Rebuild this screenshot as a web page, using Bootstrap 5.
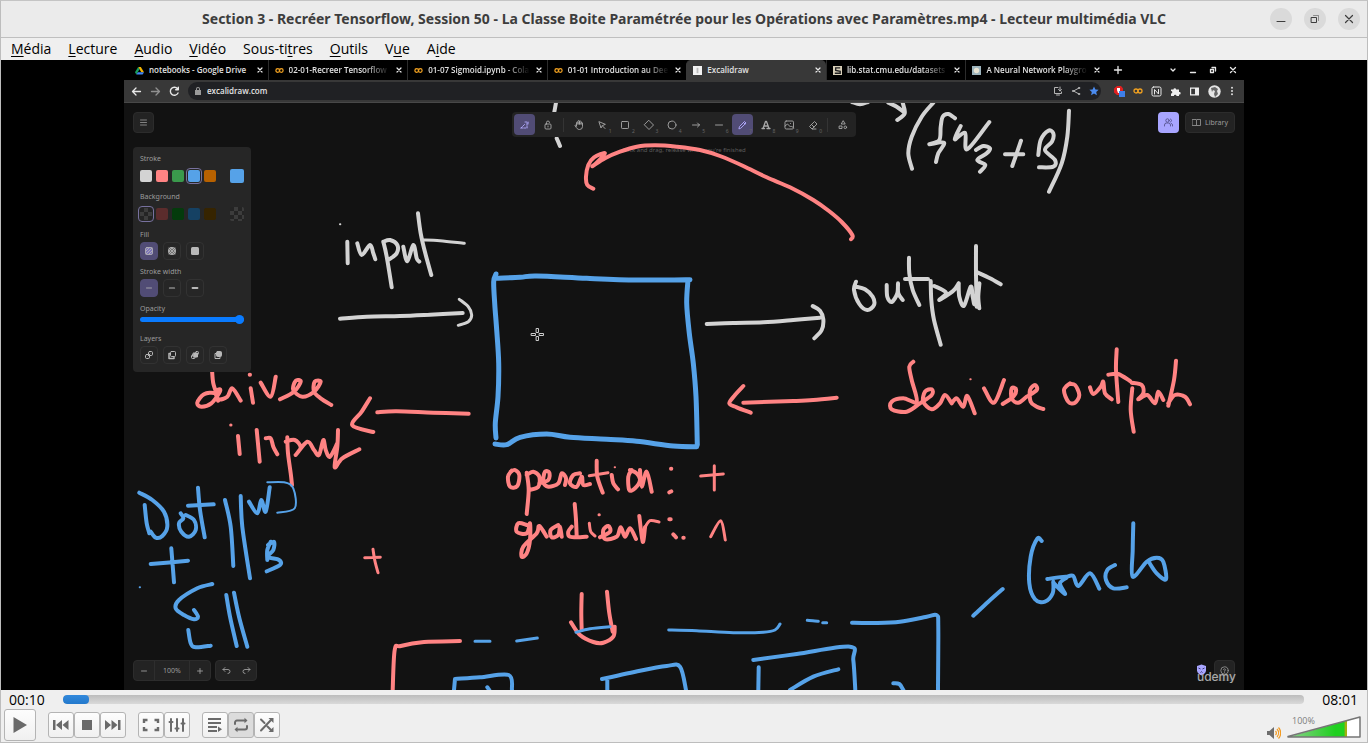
<!DOCTYPE html>
<html lang="fr">
<head>
<meta charset="utf-8">
<meta name="viewport" content="width=device-width, initial-scale=1">
<title>Lecteur multimédia VLC</title>
<link href="https://cdn.jsdelivr.net/npm/bootstrap@5.3.0/dist/css/bootstrap.min.css" rel="stylesheet">
<style>
body{font-family:"Open Sans","Noto Sans",sans-serif;font-size:14px;line-height:20px;background:#efefef;color:#000;height:100vh}
.app{border:1px solid #bdbdbd;border-top-color:#c4c4c4}
button{font:inherit;color:inherit;padding:0;border:0;background:none;display:inline-flex;align-items:center;justify-content:center;flex:none}
svg{display:block;flex:none}
.ic{fill:none;stroke:currentColor;stroke-linecap:round;stroke-linejoin:round}
.titlebar{height:37px;background:#ebebeb;border-bottom:1px solid #bfbfbf}
.titlebar h1{font-family:"Noto Sans",sans-serif;font-size:14px;line-height:20px;font-weight:700;color:#3d3d3d}
.side{width:102px;padding-right:7px}
.winbtn{width:22px;height:22px;border-radius:50%;background:#dadada;color:#3d3d3d}
.menubar{height:22px;padding:0 10px;gap:17px}
.menubar a{color:#000;text-decoration:none}
.menubar u{text-underline-offset:2px}
.stage{background:#000;min-height:0}
.screen{aspect-ratio:16/9;background:#121212;min-height:0;overflow:hidden;color:#e8e8e8;font-size:8px;line-height:12px}
.tabs{height:20px;background:#000;padding-left:5px;padding-right:7px}
.tabset{width:976px}
.btab{flex:1 1 0;min-width:0;padding:0 4px 0 6px;gap:5px;font-weight:600}
.btab+.btab{border-left:1px solid #2c2c2c}
.btab.on{background:#383838;border-radius:5px 5px 0 0;border-color:#383838}
.btab .cap{overflow:hidden;white-space:nowrap;flex:1 1 0;color:#e2e2e2}
.fade-r{-webkit-mask-image:linear-gradient(90deg,#000 75%,transparent)}
.urlbar{height:23px;background:#383838;border-bottom:1px solid #484848;padding:0 5px 0 7px;gap:8px}
.omni{height:18px;border-radius:9px;background:#202124;padding:0 2px 0 5px}
.omni input{background:none;border:0;outline:0;color:#e4e4e4;padding:0;min-width:0;font-weight:600}
.canvas{min-height:0;padding:9px;font-family:"Noto Sans",sans-serif;font-size:7px;line-height:10px;color:#9c9c9c}
.ink{position:absolute;inset:0;width:100%;height:100%;z-index:1;fill:none;stroke-linecap:round;stroke-linejoin:round}
.over{position:relative;z-index:2}
.board{display:grid;grid-template-columns:1fr 344px 1fr;row-gap:10px;align-items:start}
.sq{width:21px;height:21px;border-radius:4px}
.isle{background:#232323;border:1px solid #2c2c2c;border-radius:4px}
.share{gap:6px}
.lib{width:auto;padding:0 6px}
.tools{background:#232323;border-radius:4px;padding:2px;height:25px}
.tools .sep{width:1px;height:14px;margin:0 2px;background:#343434}
.tools button{position:relative;color:#a8a8a8}
.tools small{position:absolute;right:1px;bottom:1px;font-size:5px;line-height:6px;color:#666}
.tools .on,.opt .on{background:#514c75;color:#b2aaff;border-color:#514c75}
.hint{color:#5c5c5c;font-size:6px;line-height:6px}
.opt{width:118px;background:#262626;border-radius:4px;padding:7px 7px 1px}
.opt fieldset{min-width:0}
.opt legend{font-size:7px;line-height:10px;margin:0;float:none}
.opt .sw{height:16px;margin:4px 0 8px;gap:4px}
.opt .sw button{width:12px;height:12px;border-radius:2px}
.opt .sw .vr{width:1px;min-height:0;height:14px;margin:0 3px;opacity:1;background:#3a3a3a}
.opt .sw .big{width:14px;height:14px}
.sel{outline:1px solid #77719e;outline-offset:1px}
.c1{background:#d3d3d3}.c2{background:#ff8383}.c3{background:#3a994c}.c4{background:#56a2e8}.c5{background:#b76100}
.d2{background:#5b2c2c}.d3{background:#043b0c}.d4{background:#154163}.d5{background:#362400}
.chk{background:repeating-conic-gradient(#3c3c3c 0 25%,#242424 0 50%) 0 0/8px 8px}
.opt .row3{gap:5px;margin:2px 0 7px}
.opt .row3 button{width:18px;height:18px;border:1px solid #323232;border-radius:4px;color:#b8b8b8}
.opt .row3 .on{border-color:#514c75}
.opt input{display:block;width:104px;height:10px;margin:0 0 10px;appearance:none;background:none}
.opt input::-webkit-slider-runnable-track{height:5px;border-radius:3px;background:#0a7bff}
.opt input::-webkit-slider-thumb{appearance:none;width:9px;height:9px;margin-top:-2px;border-radius:50%;background:#0a7bff}
.foot .isle button{height:19px;width:20px}
.foot .isle .pct{width:36px;border:solid #2e2e2e;border-width:0 1px}
.collab{background:#a8a5ff;color:#4a4780}
.brand{position:absolute;right:-1px;bottom:-3px;font-family:Inter,sans-serif;font-size:12px;line-height:14px;font-weight:500;color:#a9a9a9}
.shield{position:absolute;right:28px;bottom:5px}
.seek{height:19px;padding:0 9px 0 8px;gap:18px}
.seek input{appearance:none;height:9px;border-radius:4px;background:linear-gradient(#bcbcbc,#d9d9d9);overflow:hidden}
.seek input::-webkit-slider-thumb{appearance:none;width:26px;height:9px;border-radius:4px;background:linear-gradient(#3289dc,#2379cc)}
.ctl{height:33px;padding:0 6px 2px 3px}
.ctl .btn-v{width:26px;height:26px;border:1px solid #b4b4b4;border-radius:3px;background:linear-gradient(#fdfdfd,#f0f0f0);color:#6a6a6a}
.ctl .play{width:32px;height:32px}
.ctl .down{background:#dcdcdc}
.vol{position:relative;width:74px;height:24px;margin-left:6px;margin-top:4px}
.vol span{position:absolute;left:5px;top:1px;font-size:9px;line-height:10px;color:#7d7d7d}
.vol input{position:absolute;inset:0;width:100%;opacity:0}
</style>
</head>
<body>
<div class="app d-flex flex-column h-100">
<header class="titlebar d-flex align-items-center flex-shrink-0">
  <div class="side"></div>
  <h1 class="flex-grow-1 text-center text-nowrap m-0">Section 3 - Recréer Tensorflow, Session 50 - La Classe Boite Paramétrée pour les Opérations avec Paramètres.mp4 - Lecteur multimédia VLC</h1>
  <div class="side d-flex justify-content-end gap-2">
    <button class="winbtn me-1" aria-label="Réduire"><svg class="ic" width="10" height="10" stroke-width="1"><path d="M1 7.500h8"/></svg></button>
    <button class="winbtn me-1" aria-label="Restaurer"><svg class="ic" width="10" height="10"><path d="M1.500 3.500h5v5h-5z"/><path d="M3.500 1.500h5v5" opacity=".5"/></svg></button>
    <button class="winbtn" aria-label="Fermer"><svg class="ic" width="10" height="10" stroke-width="1.200"><path d="M1.500 1.500l7 7M8.500 1.500l-7 7"/></svg></button>
  </div>
</header>
<nav class="menubar d-flex align-items-center flex-shrink-0">
  <a href="#"><u>M</u>édia</a><a href="#"><u>L</u>ecture</a><a href="#"><u>A</u>udio</a><a href="#"><u>V</u>idéo</a><a href="#">Sous-ti<u>t</u>res</a><a href="#"><u>O</u>utils</a><a href="#">V<u>u</u>e</a><a href="#">A<u>i</u>de</a>
</nav>
<main class="stage flex-grow-1 d-flex justify-content-center">
<div class="screen d-flex flex-column">
  <div class="tabs d-flex align-items-center flex-shrink-0">
    <div class="tabset d-flex align-self-stretch" id="tabset"></div>
    <button class="ms-2 me-auto" aria-label="Nouvel onglet"><svg class="ic" width="10" height="10" stroke-width="1.300"><path d="M5 1.500v7M1.500 5h7"/></svg></button>
    <div class="d-flex gap-2 pe-0">
      <button class="me-1" aria-label="Onglets"><svg class="ic" width="8" height="8" stroke-width="1.300"><path d="M2 3l2 2 2-2"/></svg></button>
      <button class="me-1" aria-label="Réduire"><svg class="ic" width="8" height="8" stroke-width="1.300"><path d="M1.500 6.500h5"/></svg></button>
      <button class="me-1" aria-label="Restaurer"><svg class="ic" width="8" height="8" stroke-width="1.300"><path d="M1.500 3.500h3v3h-3zM3 1.500h3.500v3.500"/></svg></button>
      <button aria-label="Fermer"><svg class="ic" width="8" height="8" stroke-width="1.300"><path d="M1.500 1.500l5 5M6.500 1.500l-5 5"/></svg></button>
    </div>
  </div>
  <div class="urlbar d-flex align-items-center flex-shrink-0">
    <button aria-label="Précédent"><svg class="ic" width="11" height="11" stroke-width="1.300"><path d="M9.500 5.500h-8M5 2L1.500 5.500 5 9"/></svg></button>
    <button aria-label="Suivant"><svg class="ic" width="11" height="11" stroke-width="1.300" opacity=".5"><path d="M1.500 5.500h8M6 2l3.500 3.500L6 9"/></svg></button>
    <button aria-label="Actualiser"><svg class="ic" width="11" height="11" stroke-width="1.400"><path d="M9 7a4 4 0 1 1-.5-4.200M9.300 1.200v2.600H6.700"/></svg></button>
    <div class="omni d-flex align-items-center flex-grow-1">
      <svg class="me-1" width="10" height="10" fill="#9a9a9a"><path d="M3 4V3a2 2 0 0 1 4 0v1h1v5H2V4zm1 0h2V3a1 1 0 0 0-2 0z"/></svg>
      <input class="flex-grow-1" aria-label="Adresse" value="excalidraw.com">
      <div class="d-flex gap-2">
        <svg class="ic" width="10" height="10" color="#b5b5b5"><path d="M5 1.500H1.500v6h7V6M3.500 9h3M7 1v4M5.500 3.500L7 5l1.500-1.500"/></svg>
        <svg class="ic" width="10" height="10" color="#b5b5b5"><path d="M8 2L2.500 5 8 8"/><circle cx="8" cy="2" r=".7"/><circle cx="2" cy="5" r=".7"/><circle cx="8" cy="8" r=".7"/></svg>
        <svg width="10" height="10" fill="#4b8cf0"><path d="M5 .5l1.400 3 3.200.3-2.400 2.200.7 3.300L5 7.600 2.100 9.300l.7-3.300L.4 3.800l3.200-.3z"/></svg>
      </div>
    </div>
    <svg class="ms-1" width="12" height="12"><path d="M4 1h4l2 2.500v4L8 10H4L1 7.500v-4z" fill="#e02020"/><path d="M4 5V3h3v5H5z" fill="#fff"/><path d="M6 6h6v6H6z" fill="#3f7fe8"/></svg>
    <svg class="ic" width="10" height="10" color="#f0a020" stroke-width="1.300"><circle cx="3" cy="5" r="2"/><circle cx="7" cy="5" r="2"/></svg>
    <svg class="ic" width="11" height="11"><rect x="1" y="1" width="9" height="9" rx="1.500"/><path d="M3.500 8V3.500L7.500 8V3.500"/></svg>
    <svg width="11" height="11" fill="#eee"><path d="M1 3.500h2.500a1.300 1.300 0 1 1 2.600 0H9V6a1.300 1.300 0 1 1 0 2.500V10H6.500a1.300 1.300 0 0 0-2.600 0H1V7.500a1.300 1.300 0 0 0 0-2.600z"/></svg>
    <svg width="11" height="11" fill="#eee"><path d="M1 1.500h9v8H1zm1.200 1.200v5.600H6V2.700z" fill-rule="evenodd"/></svg>
    <svg width="13" height="13"><circle cx="6.500" cy="6.500" r="6.200" fill="#e4e4e4"/><path d="M3 3l4-1 3 2-1 2 1 3-3 3-1-3 1-3-2-1-1 2z" fill="#666"/></svg>
    <svg class="me-1" width="6" height="10" fill="#ddd"><circle cx="3" cy="1.700" r="1"/><circle cx="3" cy="5" r="1"/><circle cx="3" cy="8.300" r="1"/></svg>
  </div>
  <div class="canvas position-relative flex-grow-1 d-flex flex-column">
    <svg class="ink" viewBox="124 103 1120 587" role="img" aria-label="Schéma manuscrit: input, output, derivee output, derivee input, operation: +, gradient: 1, Dot W + B, Couche"><g id="ink"></g><path d="M536.500 328.500h2v4h-2zM536.500 336.500h2v4h-2zM531.500 333.500h4v2h-4zM539.500 333.500h4v2h-4z" fill="#111" stroke="#ccc"/></svg>
    <div class="board">
      <div class="over"><button class="sq isle" aria-label="Menu"><svg class="ic" width="9" height="9" stroke-width=".8"><path d="M1.500 2h6M1.500 4.500h6M1.500 7h6"/></svg></button></div>
      <div class="tools over d-flex align-items-center justify-content-between" id="tools"></div>
      <div class="share over d-flex justify-content-end">
        <button class="sq collab" aria-label="Collaborer"><svg class="ic" width="11" height="11" stroke-width=".8"><circle cx="4.500" cy="3.500" r="1.700"/><path d="M1.500 9V8a2 2 0 0 1 2-2h2a2 2 0 0 1 2 2v1M7.500 2a1.600 1.600 0 0 1 0 3M9.500 9V8a2 2 0 0 0-1-1.600"/></svg></button>
        <button class="isle sq lib gap-1"><svg class="ic" width="9" height="9" stroke-width=".8"><path d="M.5 1.500h3.500l.5.500.5-.5h3.500v6H5l-.5.500-.5-.5H.5zM4.500 2v5.500"/></svg>Library</button>
      </div>
      <div class="opt over">
        <fieldset><legend>Stroke</legend><div class="sw d-flex align-items-center"><button class="c1" aria-label="Blanc"></button><button class="c2" aria-label="Rouge"></button><button class="c3" aria-label="Vert"></button><button class="c4 sel" aria-label="Bleu"></button><button class="c5" aria-label="Orange"></button><i class="vr"></i><button class="c4 big" aria-label="Couleur du trait"></button></div></fieldset>
        <fieldset><legend>Background</legend><div class="sw d-flex align-items-center"><button class="chk sel" aria-label="Transparent"></button><button class="d2" aria-label="Rouge"></button><button class="d3" aria-label="Vert"></button><button class="d4" aria-label="Bleu"></button><button class="d5" aria-label="Brun"></button><i class="vr"></i><button class="chk big" aria-label="Couleur du fond"></button></div></fieldset>
        <fieldset><legend>Fill</legend><div class="row3 d-flex">
          <button class="on" aria-label="Hachures"><svg class="ic" width="10" height="10" stroke-width=".8"><rect x="1.500" y="1.500" width="7" height="7" rx="1.500" fill="#7d75b8"/><path d="M2 5l3-3M2 8l6-6M5 8l3-3"/></svg></button>
          <button aria-label="Croisé"><svg class="ic" width="10" height="10" stroke-width=".8"><rect x="1.500" y="1.500" width="7" height="7" rx="2.500" fill="#707070"/><path d="M2 5l3-3M2 8l6-6M5 8l3-3M2 5l3 3M2 2l6 6M5 2l3 3"/></svg></button>
          <button aria-label="Plein"><svg width="10" height="10" fill="#b8b8b8"><rect x="1" y="1" width="8" height="8" rx="1.500"/></svg></button></div></fieldset>
        <fieldset><legend>Stroke width</legend><div class="row3 d-flex">
          <button class="on" aria-label="Fin"><svg class="ic" width="8" height="8" stroke-width=".8"><path d="M1.500 4h5"/></svg></button>
          <button aria-label="Moyen"><svg class="ic" width="8" height="8" stroke-width="1.200"><path d="M1.500 4h5"/></svg></button>
          <button aria-label="Épais"><svg class="ic" width="8" height="8" stroke-width="1.800"><path d="M1.500 4h5"/></svg></button></div></fieldset>
        <label for="opa" class="d-block">Opacity</label><input id="opa" type="range" value="100">
        <fieldset><legend>Layers</legend><div class="row3 d-flex">
          <button aria-label="Arrière-plan"><svg class="ic" width="10" height="10"><rect x="1.500" y="4.500" width="4" height="4" rx="1.200"/><rect x="4.500" y="1.500" width="4" height="4" rx="1.200"/><path d="M4 6l2-2"/></svg></button>
          <button aria-label="Reculer"><svg class="ic" width="10" height="10"><path d="M3 3.500H2v5h5v-1" stroke-width="1.500"/><rect x="3.500" y="1.500" width="5" height="5" rx="1"/></svg></button>
          <button aria-label="Avancer"><svg class="ic" width="10" height="10"><rect x="1.500" y="5" width="3.500" height="3.500" rx="1"/><rect x="3.500" y="3" width="4" height="4" fill="currentColor"/><rect x="5.500" y="1.500" width="3" height="3" rx="1"/></svg></button>
          <button aria-label="Premier plan"><svg class="ic" width="10" height="10"><path d="M3 3.500H2v5h5v-1"/><rect x="3.500" y="1.500" width="5" height="5" rx="1" fill="currentColor"/></svg></button></div></fieldset>
      </div>
      <div class="hint text-center">Click and drag, release when you're finished</div>
    </div>
    <div class="foot over mt-auto d-flex">
      <div class="isle d-flex me-1"><button aria-label="Dézoomer"><svg class="ic" width="8" height="8" stroke-width=".9"><path d="M1.500 4h5"/></svg></button><button class="pct">100%</button><button aria-label="Zoomer"><svg class="ic" width="8" height="8" stroke-width=".9"><path d="M1.500 4h5M4 1.500v5"/></svg></button></div>
      <div class="isle d-flex me-auto"><button aria-label="Annuler"><svg class="ic" width="9" height="9" stroke-width=".9"><path d="M3 5.500L1 3.500l2-2M1 3.500h5a2 2 0 0 1 0 4"/></svg></button><button aria-label="Rétablir"><svg class="ic" width="9" height="9" stroke-width=".9"><path d="M6 5.500l2-2-2-2M8 3.500H3a2 2 0 0 0 0 4"/></svg></button></div>
      <button class="sq isle" aria-label="Aide"><svg class="ic" width="9" height="9" stroke-width=".8"><circle cx="4.500" cy="4.500" r="3.700"/><path d="M3.500 3.500a1 1 0 1 1 1 1.300v.4M4.500 6.600v.1"/></svg></button>
      <svg class="shield" width="11" height="12"><path d="M1 2l4.500-1.500L10 2v4.500C10 9 7.500 10.500 5.500 11.500 3.500 10.500 1 9 1 6.500z" fill="#a8a5ff"/><path d="M2.500 4l2 1M8.500 4l-2 1M4.500 8.500l1-.8 1 .8" stroke="#3a3670" fill="none"/></svg>
      <span class="brand">udemy</span>
    </div>
  </div>
</div>
</main>
<div class="seek d-flex align-items-center flex-shrink-0"><span>00:10</span><input class="flex-grow-1" type="range" min="0" max="481" value="0" aria-label="Position"><span>08:01</span></div>
<footer class="ctl d-flex align-items-center flex-shrink-0">
  <button class="btn-v play" aria-label="Lecture"><svg width="16" height="18" fill="currentColor"><path d="M1.500 1v16L15 9z"/></svg></button>
  <div class="d-flex ms-2 ps-1">
    <button class="btn-v" aria-label="Précédent"><svg width="18" height="12" fill="currentColor"><path d="M1 1h2.500v10H1zM10 1v10L4 6zM16.500 1v10l-6-5z"/></svg></button>
    <button class="btn-v" aria-label="Arrêter"><svg width="10" height="10" fill="currentColor"><path d="M0 0h10v10H0z"/></svg></button>
    <button class="btn-v" aria-label="Suivant"><svg width="18" height="12" fill="currentColor"><path d="M14 1h2.500v10H14zM7.500 1v10l6-5zM1 1v10l6-5z"/></svg></button>
  </div>
  <div class="d-flex ms-2 ps-1">
    <button class="btn-v" aria-label="Plein écran"><svg class="ic" width="18" height="14" stroke-width="2.400"><path d="M2 5V2h3.500M12.500 2H16v3M16 9v3h-3.500M5.500 12H2V9" stroke-linecap="butt" stroke-linejoin="miter"/></svg></button>
    <button class="btn-v" aria-label="Réglages"><svg class="ic" width="18" height="14" stroke-width="2"><path d="M3 1v12M9 1v12M15 1v12M1.500 4h3M7.500 10.500h3M13.500 5.500h3"/></svg></button>
  </div>
  <div class="d-flex ms-2 ps-1">
    <button class="btn-v" aria-label="Liste de lecture"><svg width="16" height="14" fill="currentColor"><path d="M1 0h13v2H1zM1 4h13v2H1zM1 8h9v2H1zM1 12h9v2H1zM11 8.500v5.500l4-2.700z"/></svg></button>
    <button class="btn-v down" aria-label="Boucle"><svg class="ic" width="16" height="16" stroke-width="2"><path d="M2 7V5.500A2 2 0 0 1 4 3.500h8.500M14 9v1.500a2 2 0 0 1-2 2H3.500"/><path d="M11.500.8v5.400l3-2.700zM4.500 9.800v5.400l-3-2.700z" fill="currentColor" stroke="none"/></svg></button>
    <button class="btn-v" aria-label="Aléatoire"><svg class="ic" width="16" height="16" stroke-width="2"><path d="M2 2.500l3.500 3.500M8.500 9.500L12 13M2 13.500L12 3"/><path d="M14.500 1v5l-5-5zM14.500 15v-5l-5 5z" fill="currentColor" stroke="none"/></svg></button>
  </div>
  <svg class="ms-auto mt-3" width="15" height="14"><path d="M1 5h2.500L8 1v12L3.500 9H1z" fill="#6d6d6d"/><path d="M9.500 5a3 3 0 0 1 0 4M11 3a6 6 0 0 1 0 8M12.500 1.500a8 8 0 0 1 0 11" fill="none" stroke="#f39a20" stroke-width="1.200"/></svg>
  <label class="vol"><svg width="74" height="24"><defs><linearGradient id="vg"><stop offset="0" stop-color="#8fd08f"/><stop offset=".8" stop-color="#1fd01f"/><stop offset=".95" stop-color="#1fd01f"/><stop offset=".97" stop-color="#a0b010"/></linearGradient></defs><path d="M1 22L73 2v20z" fill="#fff"/><path d="M1 22L60 5.600V22z" fill="url(#vg)"/><path d="M1 21.500L73 2v20H1z" fill="none" stroke="#757575" stroke-width="1.500" stroke-linejoin="round"/></svg><span>100%</span><input type="range" aria-label="Volume" value="100"></label>
</footer>
</div>
<script src="https://cdn.jsdelivr.net/npm/bootstrap@5.3.0/dist/js/bootstrap.bundle.min.js"></script>
<script>
const colab='<g fill="none" stroke="#f0a020" stroke-width="1.400"><circle cx="3" cy="5" r="2"/><circle cx="7" cy="5" r="2"/></g>';
const tabs=[['notebooks - Google Drive','<path d="M3.500 1h3L10 7H7z" fill="#f4b400"/><path d="M3.500 1L0 7l1.500 2.500L5 3.500z" fill="#18a05e"/><path d="M1.500 9.500L3.200 7H10L8.500 9.500z" fill="#4285f4"/>'],
['02-01-Recreer Tensorflow',colab],['01-07 Sigmoid.ipynb - Cola',colab],['01-01 Introduction au Dee',colab],
['Excalidraw','<path d="M0 0h10v10H0z" fill="#f2f2f2"/><path d="M4 2h2v6H4z" fill="#bbb"/>'],
['lib.stat.cmu.edu/datasets','<path d="M0 0h10v10H0z" fill="#d8cfb8"/><path d="M8 2H3v3l5 1v2H2" fill="none" stroke="#222" stroke-width="1.500"/>'],
['A Neural Network Playgro','<path d="M0 0h10v10H0z" fill="#9db4bd"/><circle cx="5" cy="5" r="3" fill="#e8e4d4"/>']];
document.getElementById('tabset').innerHTML=tabs.map((t,i)=>`<div class="btab d-flex align-items-center${i==4?' on':''}"><svg width="9" height="9" viewBox="0 0 10 10">${t[1]}</svg><span class="cap${i==0||i==4?'':' fade-r'}">${t[0]}</span><button aria-label="Fermer l'onglet"><svg class="ic" width="8" height="8" stroke-width="1.200"><path d="M2 2l4 4M6 2l-4 4"/></svg></button></div>`).join('');

const tools=[['Lasso','<path d="M2 9h6V3M2 9l4-4M6 3h3v3" stroke-dasharray="2 1"/>','','on'],['Verrou','<rect x="3" y="5" width="6" height="5" rx="1"/><path d="M4.500 5V3.500a1.500 1.500 0 0 1 3 0M6 7v1"/>'],0,
['Main','<path d="M3.500 7V3.500a.8.800 0 0 1 1.500 0V5.500 2a.8.800 0 0 1 1.500 0v3.500V2.500a.8.800 0 0 1 1.500 0v3V4a.8.800 0 0 1 1.500 0v3.500a3 3 0 0 1-3 3c-2 0-2.500-1-4.500-3.800 0-1 1-1 1.500.3"/>'],
['Sélection','<path d="M3 3l2 6 1.300-2.400L9 5.500zM6.500 7L9 9.500"/>',1],['Rectangle','<rect x="2.500" y="2.500" width="7" height="7" rx=".8"/>',2],['Losange','<path d="M6 1.500L10.500 6 6 10.500 1.500 6z"/>',3],['Ellipse','<circle cx="6" cy="6" r="4"/>',4],
['Flèche','<path d="M2.500 6h7M7.500 4l2 2-2 2"/>',5],['Ligne','<path d="M2.500 6h7"/>',6],['Crayon','<path d="M3 9.500l.5-2 5-5 1.500 1.500-5 5zM7.500 3.500L9 5"/>',7,'on'],['Texte','<path d="M2 9.500h2.500M7 9.500h3M3 9.500L5.500 2.500h1L9 9.500M4.300 7h3.500" stroke-width="1.300"/>',8],
['Image','<rect x="2" y="2" width="8.500" height="8" rx="1.200"/><path d="M2 7l2.500-2 3 3 1-1 2 2M7.500 4.500h.1"/>',9],['Gomme','<path d="M5 10L2.500 7.500 7.500 2.500 10 5 5 10h4M4.500 5.500L7 8"/>',0],0,['Formes','<path d="M6 2L4.200 5h3.600z"/><rect x="2.500" y="7" width="2.500" height="2.500"/><circle cx="8.300" cy="8.300" r="1.300"/>']];
document.getElementById('tools').innerHTML=tools.map(t=>t?`<button class="sq ${t[3]||''}" aria-label="${t[0]}"><svg class="ic" width="12" height="12" stroke-width=".9">${t[1]}</svg>${t[2]===undefined||t[2]===''?'':`<small>${t[2]}</small>`}</button>`:'<i class="sep"></i>').join('');

/* Freehand strokes: [origin x, origin y, colour, width, point runs]; points are in thirds of a unit from the origin. */
const W='#d3d3d3',R='#ff8383',B='#56a2e8';
const ink=[
[480,100,R,4,'340,266 322,255 318,230 325,195 342,172 375,160 348,190 338,198 375,175 420,155 470,140 525,136 590,140 660,150 720,168 790,198 860,232 930,262 1000,300 1048,334 1085,366 1117,405 1113,418'],
[480,100,W,4,'228,8 223,36|230,115 240,138'],
[840,100,W,4,'36,6 60,13 84,6|145,8 170,20 190,35|188,8 194,40 172,60|495,163 550,163|543,122 530,160 517,198|595,165 602,120 625,92 640,100 636,125 615,150 645,180 640,200 597,202|362,78 344,118 375,98 382,148 448,66|408,150 430,138 450,145 440,160 412,180 436,195 420,215|345,55 325,42 308,50 302,80 298,120 268,133 312,128 295,160 288,186'],
[840,100,W,4,'280,8 245,50 215,110 205,160 216,206|687,32 682,110 665,190 627,275|48,545 42,570 58,612 82,630 102,615 98,590 75,568 48,560|140,555 142,590 155,606 172,580 174,550 175,580 188,600|207,473 208,520 218,570 238,615|195,537 264,537|272,543 274,600 282,660 302,734|283,558 318,578 298,600 340,572 356,550|356,550 358,590 372,617 392,560 398,590 405,612 418,550 415,590 418,625|408,438 408,520 410,620|412,517 450,535 482,553'],
[320,190,W,2,'60,103 61,103'],
[320,190,W,3,'418,328 445,350 455,375 445,395 415,406|308,150 360,152 433,160'],
[320,190,W,4,'82,155 83,220|112,160 125,195 150,165 160,190 166,208|190,155 200,200 215,292|190,155 210,150 232,165 230,190 208,208|250,170 262,214 280,165 290,205 298,215|294,70 302,130 316,190 334,255|60,386 140,380 240,378 330,374 428,369|1160,402 1240,399 1330,397 1420,390 1500,383|1478,348 1500,362 1510,388 1505,420 1483,445'],
[320,190,B,5,'528,252 521,275 524,340 530,420 536,520 534,620 526,700 528,744|528,265 600,262 650,258 800,265 950,270 1110,269|1104,270 1100,340 1108,430 1120,520 1128,620 1132,765|525,762 560,764 600,742 680,732 750,742 860,748 950,754 1060,768 1130,770'],
[320,190,R,4,'172,667 230,664 340,668 446,671|150,625 125,665 97,706 160,726|1550,623 1480,630 1420,633 1270,638|1270,588 1245,615 1228,640 1250,652 1292,668'],
[124,360,R,4,'264,28 268,70 280,105|282,122 272,100 240,103 220,128 232,140 262,130 285,100 288,88 275,95 284,118 310,110 325,85 350,122|377,44 378,44|380,85 387,128|410,68 440,110 455,50|468,118 510,95 530,65 515,62 508,90 535,110 570,95 590,65 572,65 570,95 590,115 622,135|342,228 347,282|398,210 407,305|425,235 440,235 448,260 460,283|490,232 492,280 500,340 504,375|485,245 512,240 530,262 515,285 550,245 570,270 585,285 598,240 605,270 618,290 640,250|642,210 640,260 632,322 655,295 706,268|1008,843 900,846 830,858 812,870 806,990'],
[124,360,R,3,'320,195 321,195|747,568 752,600 762,638|722,593 769,592'],
[124,360,B,4,'62,435 68,490 76,520|46,398 85,420 120,455 130,500 115,528 95,533 80,515|170,460 178,475 165,490 172,515 195,530 215,510 210,480 185,465|222,383 228,450 242,532|192,437 269,433|303,420 320,500 328,618|350,408 355,500 378,655|375,425 400,460 412,420 425,455 437,382|440,545 430,570 430,600|432,555 450,545 448,570 432,590 465,600 468,615 428,634|142,565 150,667|80,612 192,602|265,672 220,685 165,720 155,745 180,765 210,778 222,770 210,750|193,810 200,850 215,862 260,857|307,705 318,770 338,858|330,698 345,770 370,860'],
[124,360,B,2,'430,367 480,367 508,385 512,445 460,458|47,682 48,682'],
[480,440,R,4,'95,92 84,110 90,140 112,138 118,105 105,90 92,95|140,98 146,150 140,222|140,105 160,95 178,110 175,140 148,150|178,130 205,120 208,98 195,95 190,125 205,140 235,130 245,100 258,115 255,135|300,100 280,105 270,130 290,140 305,110 310,135 330,132|350,62 352,110 368,158|395,105 400,130 414,148|455,90 445,110 448,150 465,145 480,120 470,100 450,90|480,90 485,140 500,95 515,155'],
[480,440,R,3,'328,107 384,98|703,77 703,150|662,108 730,102|328,250 332,275 345,288|357,224 358,224|495,262 510,242 537,246|692,290 722,242 736,300'],
[480,440,R,2,'404,82 405,82'],
[480,440,R,4,'140,255 115,250 110,275 140,280 150,250 150,300 140,340 125,350 130,320 170,280 178,258 200,290|235,255 212,270 215,292 235,285 240,260 245,290|284,192 288,240 290,290|275,260 265,275 270,290 300,292 320,290|360,292 390,275 385,258 370,270 375,297 410,290 422,262 435,290 450,265 468,297|478,228 488,305 495,262'],
[480,440,R,4,'573,86 574,86|568,157 574,154|568,238 572,238|580,283 588,292|610,293 611,293|305,462 304,520 305,570|381,455 388,520 398,575|273,547 300,585 340,606 370,608 400,590 404,560'],
[480,440,B,3,'288,577 330,566 390,560|566,570 650,572 760,578 850,577 885,570 900,552|982,541 1015,544|1028,548 1040,548|-15,604 30,604|110,603 172,594'],
[480,440,B,4,'1116,548 1180,549 1260,545 1340,530 1370,526 1375,560 1374,750|-75,717 0,712 86,705 96,750|-75,717 -78,750|22,742 28,750|366,717 480,692 560,678 600,680 618,750|382,720 382,750|820,660 950,642 1110,620 1120,660 1126,750|836,682 835,750|930,750 1000,710 1075,688|1240,730 1258,732 1270,750'],
[860,340,R,4,'160,65 148,80 155,120 170,185 130,175 95,185 95,208 140,215 180,190 215,165 215,148 195,155 190,185 215,208 240,190 255,165 275,190|275,190 290,175 310,200 322,168 344,220|372,145 402,188 432,120|428,192 460,170 468,148 455,145 455,175 475,188 500,170 530,150 525,135 510,150 512,185 530,200 550,207|630,130 612,150 625,185 645,188 658,165 645,135 628,132|690,142 700,162 722,140 730,125 735,160 755,178|770,28 768,90 775,186|745,104 775,102 810,123|817,145 812,210 821,275|815,128 845,135 850,160 835,178 862,165 885,190 895,155 910,180|948,62 942,120 925,197|925,190 945,165 975,170 990,193'],
[860,340,R,2,'331,118 332,118'],
[860,340,B,4,'545,603 532,596 512,650 508,730 525,778 555,785 578,760 580,725|562,717 620,710 600,730 615,762 580,728|620,710 640,708 655,738 690,700 718,746|765,675 742,690 738,720 760,745 800,742|820,550 818,630 818,710 860,665 890,653 910,665 918,718 890,700 868,668|428,747 385,785 340,827']];
const smooth=p=>{let d='M'+p[0];for(let i=0;i<p.length-1;i++){const a=p[i-1]||p[i],b=p[i],c=p[i+1],e=p[i+2]||c;
d+='C'+[b[0]+(c[0]-a[0])/6,b[1]+(c[1]-a[1])/6,c[0]-(e[0]-b[0])/6,c[1]-(e[1]-b[1])/6,c[0],c[1]].map(v=>v.toFixed(1))}return d};
document.getElementById('ink').innerHTML=ink.map(([x,y,c,w,s])=>`<path stroke="${c}" stroke-width="${w}" d="${s.split('|').map(r=>smooth(r.split(' ').map(q=>{const [u,v]=q.split(',').map(Number);return [+(x+u/3).toFixed(1),+(y+v/3).toFixed(1)]}))).join('')}"/>`).join('');
</script>
</body>
</html>
